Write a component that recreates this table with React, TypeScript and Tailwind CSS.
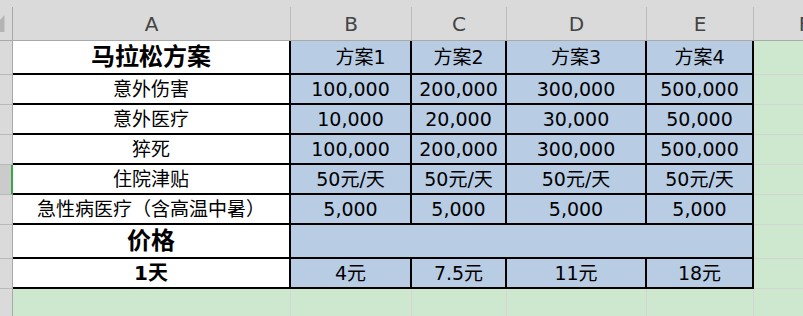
import React from 'react';

const cols = ['A', 'B', 'C', 'D', 'E', 'F'];

const rows: { label: string; values: string[]; big?: boolean; bold?: boolean; merged?: boolean }[] = [
    { label: '马拉松方案', values: ['方案1', '方案2', '方案3', '方案4'], big: true },
    { label: '意外伤害', values: ['100,000', '200,000', '300,000', '500,000'] },
    { label: '意外医疗', values: ['10,000', '20,000', '30,000', '50,000'] },
    { label: '猝死', values: ['100,000', '200,000', '300,000', '500,000'] },
    { label: '住院津贴', values: ['50元/天', '50元/天', '50元/天', '50元/天'] },
    { label: '急性病医疗（含高温中暑）', values: ['5,000', '5,000', '5,000', '5,000'] },
    { label: '价格', values: [], big: true, merged: true },
    { label: '1天', values: ['4元', '7.5元', '11元', '18元'], bold: true },
];

const rowHeights = ['h-[34px]', 'h-[30px]', 'h-[30px]', 'h-[30px]', 'h-[30px]', 'h-[30px]', 'h-[34px]', 'h-[30px]'];

const font = { fontFamily: '"DejaVu Sans", "Noto Sans CJK SC", sans-serif' };

function RowHeader({ active, height }: { active?: boolean; height: string }) {
    return (
        <div
            className={`${height} border-b border-[#b9b9b9] ${
                active ? 'bg-[#cbcbcb] border-r-2 border-r-[#3aa64a]' : 'bg-[#dadada] border-r border-r-[#a9a9a9]'
            }`}
        />
    );
}

export default function App() {
    return (
        <div className="w-[803px] h-[316px] overflow-hidden bg-[#cde8cf] text-black" style={font}>
            <div className="grid w-[860px] grid-cols-[13px_278px_121px_95px_140px_107px_102px_1fr]">
                {/* Column header */}
                <div className="h-[41px] bg-[#dadada] border-b border-[#a9a9a9] flex items-end">
                    <div className="relative h-[33px] w-full border-r border-[#a9a9a9]">
                        <svg className="absolute left-0 top-[8px]" width="5" height="18" viewBox="0 0 5 18">
                            <polygon points="4.5,0 4.5,17 0,17 0,5" fill="#b4b4b4" />
                        </svg>
                    </div>
                </div>
                {cols.map((c) => (
                    <div key={c} className="h-[41px] bg-[#dadada] border-b border-[#a9a9a9] flex items-end">
                        <div className="h-[33px] w-full border-r border-[#bdbdbd] flex items-center justify-center text-[20px] text-[#444444]">
                            {c}
                        </div>
                    </div>
                ))}
                <div className="h-[41px] bg-[#dadada] border-b border-[#a9a9a9]" />

                {/* Table rows */}
                {rows.map((row, i) => {
                    const h = rowHeights[i];
                    const weight = row.big ? 'text-[24px] font-bold' : row.bold ? 'text-[20px] font-bold' : 'text-[19px]';
                    return (
                        <React.Fragment key={i}>
                            <RowHeader height={h} active={i === 4} />
                            <div className={`${h} bg-white border-r-2 border-b-2 border-black flex items-center justify-center ${weight}`}>
                                {row.label}
                            </div>
                            {row.merged ? (
                                <div className={`${h} col-span-4 bg-[#b8cce4] border-r-2 border-b-2 border-black`} />
                            ) : (
                                row.values.map((v, j) => (
                                    <div
                                        key={j}
                                        className={`${h} bg-[#b8cce4] border-r-2 border-b-2 border-black flex items-center justify-center text-[19px] ${
                                            i === 0 && j === 0 ? 'pl-5' : ''
                                        }`}
                                    >
                                        {v}
                                    </div>
                                ))
                            )}
                            <div className={`${h} col-span-2 border-b border-[#d4d4d4]`} />
                        </React.Fragment>
                    );
                })}

                {/* Empty rows below */}
                {[0, 1].map((r) => (
                    <React.Fragment key={`e${r}`}>
                        <RowHeader height="h-[30px]" />
                        {cols.map((c) => (
                            <div key={c} className="h-[30px] border-r border-b border-[#d4d4d4]" />
                        ))}
                        <div className="h-[30px] border-b border-[#d4d4d4]" />
                    </React.Fragment>
                ))}
            </div>
        </div>
    );
}
